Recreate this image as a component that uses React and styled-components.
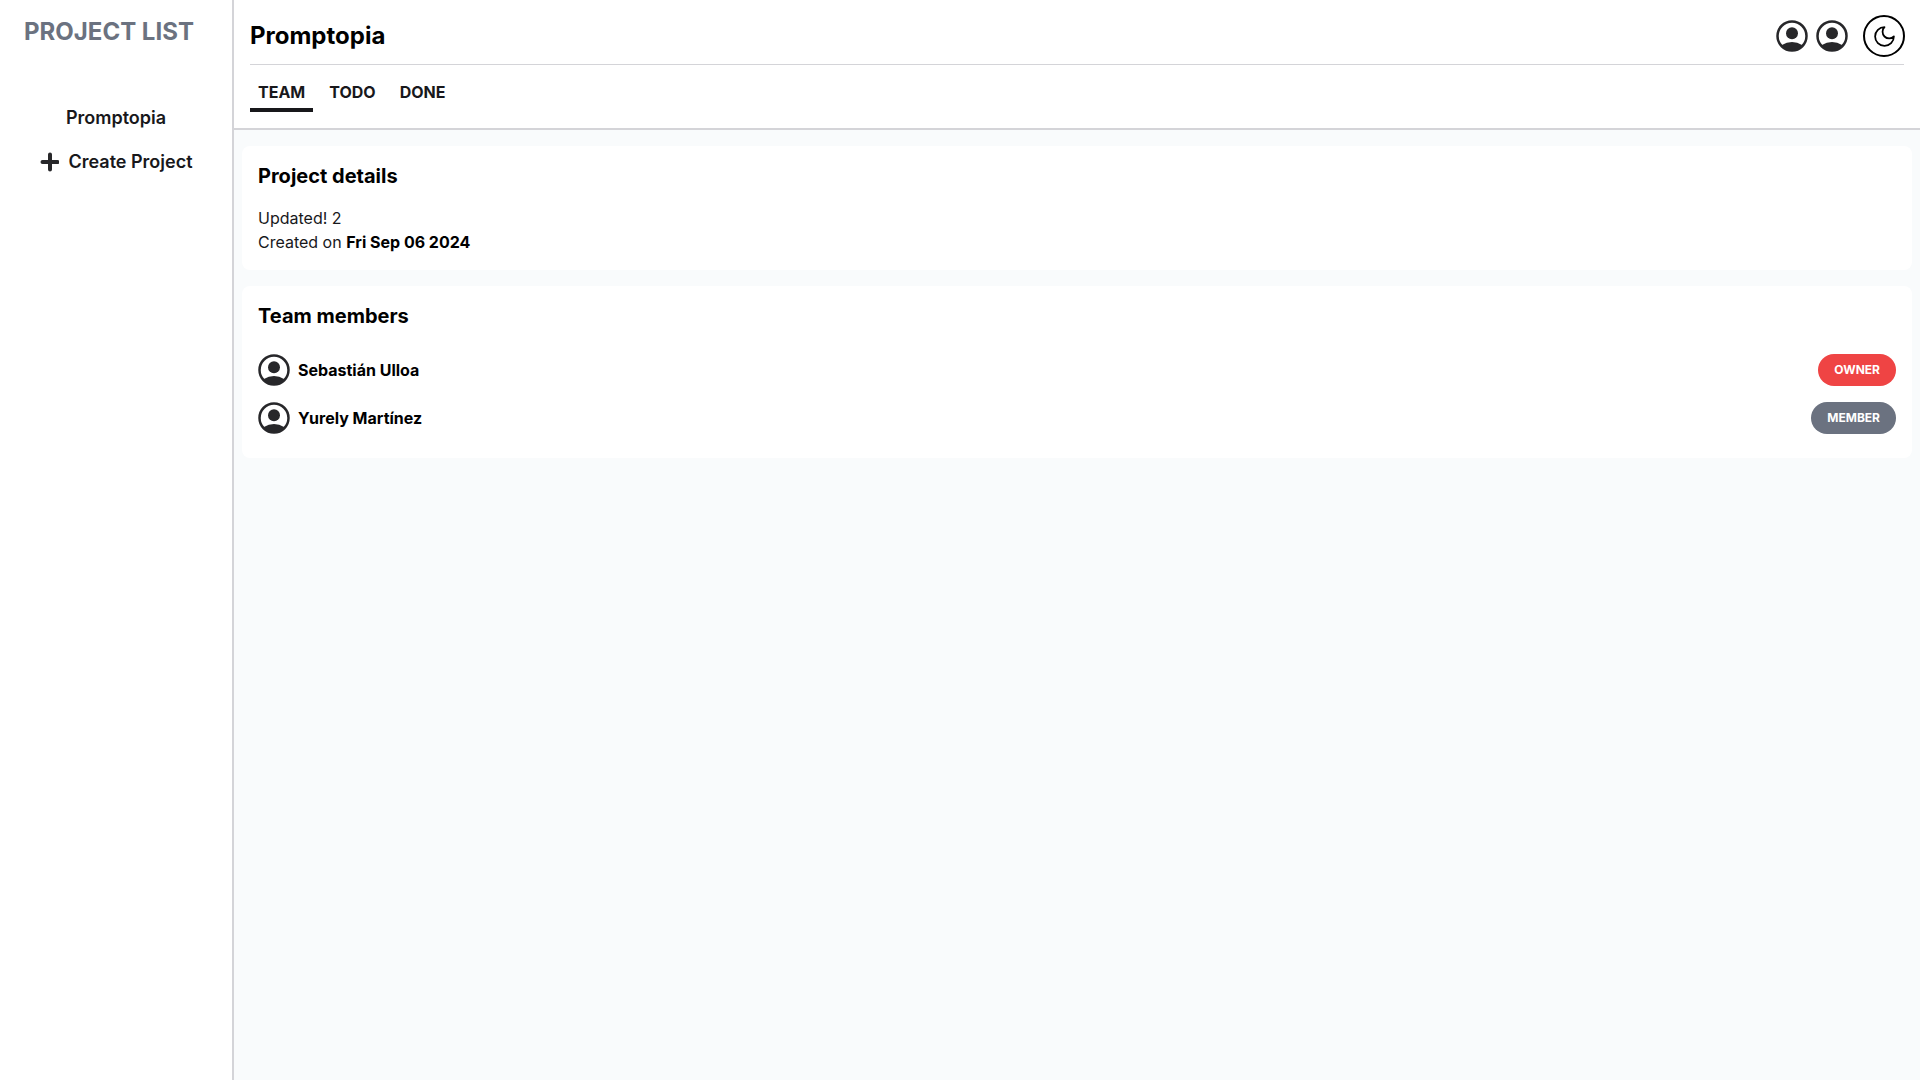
import React from "react";
import styled, { createGlobalStyle } from "styled-components";

const members = [
  { name: "Sebastián Ulloa", role: "OWNER", color: "#ef4444" },
  { name: "Yurely Martínez", role: "MEMBER", color: "#6b7280" },
];

function UserIcon({ size = 32 }) {
  return (
    <svg width={size} height={size} viewBox="0 0 32 32">
      <defs>
        <clipPath id="avatar-clip">
          <circle cx="16" cy="16" r="14.5" />
        </clipPath>
      </defs>
      <circle cx="16" cy="13.2" r="6" fill="#27272a" />
      <ellipse cx="16" cy="31" rx="13.5" ry="9" fill="#27272a" clipPath="url(#avatar-clip)" />
      <circle cx="16" cy="16" r="14.5" fill="none" stroke="#27272a" strokeWidth="2.5" />
    </svg>
  );
}

function App() {
  return (
    <Page>
      <CSSReset />
      <Sidebar>
        <SideTitle>PROJECT LIST</SideTitle>
        <SideList>
          <SideItem>Promptopia</SideItem>
          <CreateItem>
            <svg width="20" height="20" viewBox="0 0 20 20">
              <path d="M11 2.5v15M3.5 10h15" stroke="#27272a" strokeWidth="4" strokeLinecap="round" />
            </svg>
            Create Project
          </CreateItem>
        </SideList>
      </Sidebar>
      <Main>
        <TopArea>
          <Header>
            <ProjectName>Promptopia</ProjectName>
            <HeaderActions>
              <UserIcon />
              <UserIcon />
              <ThemeButton>
                <svg width="25" height="25" viewBox="0 0 24 24" fill="none">
                  <path d="M12 3a6 6 0 0 0 9 9 9 9 0 1 1-9-9Z" stroke="#000" strokeWidth="1.7" strokeLinejoin="round" />
                </svg>
              </ThemeButton>
            </HeaderActions>
          </Header>
          <Tabs>
            <Tab $active>TEAM</Tab>
            <Tab>TODO</Tab>
            <Tab>DONE</Tab>
          </Tabs>
        </TopArea>
        <Content>
          <Card>
            <CardTitle>Project details</CardTitle>
            <Text>Updated! 2</Text>
            <Text>
              Created on <strong>Fri Sep 06 2024</strong>
            </Text>
          </Card>
          <Card>
            <CardTitle>Team members</CardTitle>
            <MemberList>
              {members.map((m) => (
                <Member key={m.name}>
                  <MemberName>
                    <UserIcon />
                    {m.name}
                  </MemberName>
                  <Badge $color={m.color}>{m.role}</Badge>
                </Member>
              ))}
            </MemberList>
          </Card>
        </Content>
      </Main>
    </Page>
  );
}

const Page = styled.div`
  display: flex;
  height: 100vh;
  background-color: #fff;
  color: #000;
`;

const Sidebar = styled.aside`
  width: 234px;
  flex-shrink: 0;
  border-right: 2px solid #d4d4d8;
  padding: 16px 24px 0;
`;

const SideTitle = styled.h1`
  font-size: 24px;
  line-height: 32px;
  font-weight: 700;
  color: #6b7280;
  white-space: nowrap;
`;

const SideList = styled.ul`
  list-style: none;
  margin: 58px -8px 0;
  display: flex;
  flex-direction: column;
  align-items: center;
  gap: 20px;
  color: #18181b;
  font-size: 18px;
  font-weight: 600;
`;

const SideItem = styled.li`
  line-height: 24px;
`;

const CreateItem = styled(SideItem)`
  display: flex;
  align-items: center;
  gap: 9px;
  white-space: nowrap;
`;

const Main = styled.main`
  flex: 1;
  display: flex;
  flex-direction: column;
  min-width: 0;
`;

const TopArea = styled.div`
  height: 130px;
  flex-shrink: 0;
  padding: 0 16px;
  border-bottom: 2px solid #d4d4d8;
`;

const Header = styled.header`
  height: 65px;
  padding-top: 8px;
  display: flex;
  justify-content: space-between;
  align-items: center;
  border-bottom: 1px solid #d4d4d8;
`;

const ProjectName = styled.h2`
  font-size: 24px;
  line-height: 32px;
  font-weight: 700;
`;

const HeaderActions = styled.div`
  display: flex;
  align-items: center;
  gap: 8px;
`;

const ThemeButton = styled.button`
  width: 42px;
  height: 42px;
  margin-left: 7px;
  margin-right: -1px;
  display: flex;
  align-items: center;
  justify-content: center;
  background: transparent;
  border: 2px solid #000;
  border-radius: 50%;
  padding: 0;
`;

const Tabs = styled.nav`
  display: flex;
  gap: 8px;
  padding-top: 16px;
`;

const Tab = styled.div`
  height: 31px;
  padding: 0 8px;
  font-size: 16px;
  line-height: 22px;
  font-weight: 700;
  color: #18181b;
  border-bottom: ${(p) => (p.$active ? "4px solid #18181b" : "none")};
`;

const Content = styled.div`
  flex: 1;
  background-color: #f9fbfc;
  padding: 16px 8px;
  display: flex;
  flex-direction: column;
  gap: 16px;
`;

const Card = styled.section`
  background-color: #fff;
  border-radius: 8px;
  padding: 16px;
`;

const CardTitle = styled.h3`
  font-size: 20px;
  line-height: 28px;
  font-weight: 700;
  margin-bottom: 16px;
`;

const Text = styled.p`
  font-size: 16px;
  line-height: 24px;
  color: #18181b;
  strong {
    font-weight: 700;
    color: #000;
  }
`;

const MemberList = styled.div`
  display: flex;
  flex-direction: column;
  gap: 16px;
  padding: 8px 0;
`;

const Member = styled.div`
  display: flex;
  justify-content: space-between;
  align-items: center;
`;

const MemberName = styled.div`
  display: flex;
  align-items: center;
  gap: 8px;
  font-size: 16px;
  font-weight: 700;
`;

const Badge = styled.span`
  height: 32px;
  padding: 0 16px 2px;
  border-radius: 16px;
  display: flex;
  align-items: center;
  background-color: ${(p) => p.$color};
  color: #fff;
  font-size: 12px;
  font-weight: 700;
`;

const CSSReset = createGlobalStyle`
*,
*::before,
*::after {
  margin: 0;
  padding: 0;
  box-sizing: border-box;
}

html,
body {
  font-family: Inter, "Liberation Sans", sans-serif;
}
`;

export default App;
